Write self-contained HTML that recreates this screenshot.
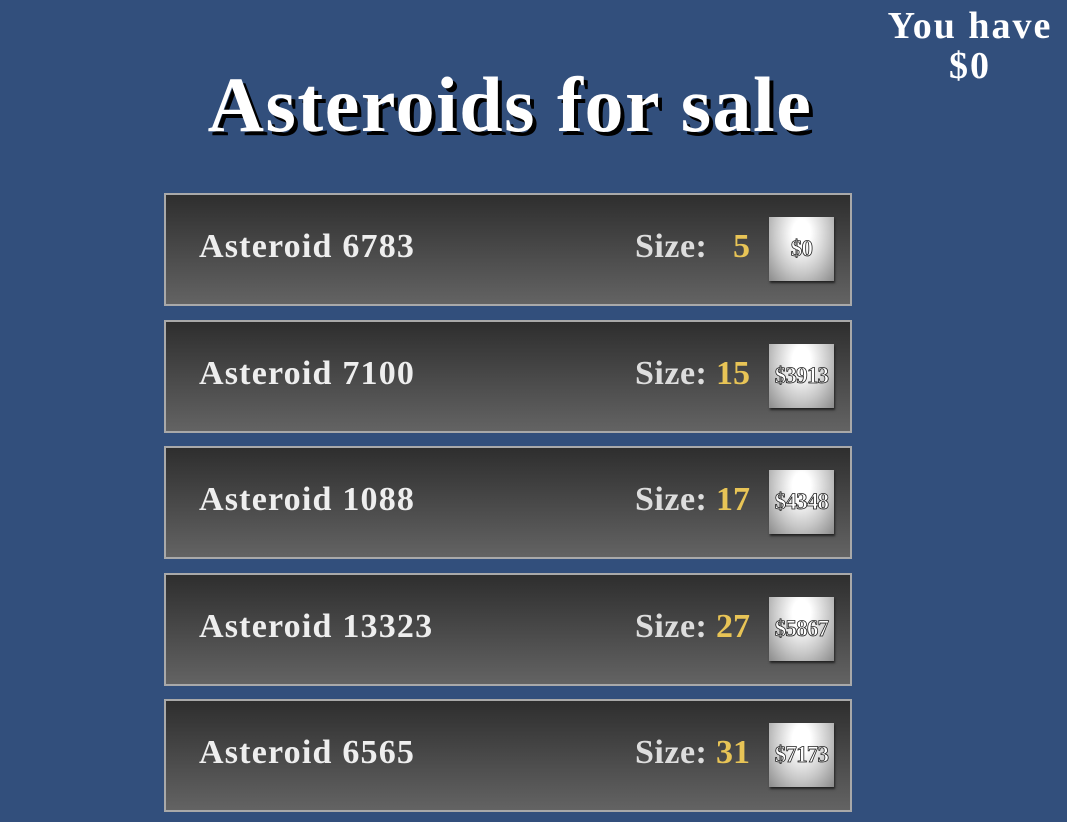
<!DOCTYPE html>
<html><head><style>
body{margin:0;width:1067px;height:822px;background:#324f7c;font-family:"Liberation Serif",serif;position:relative;overflow:hidden;color:#fff}
h1{position:absolute;left:0;width:1020px;text-align:center;top:60px;margin:0;font-size:78px;letter-spacing:1.5px;font-weight:bold;text-shadow:4px 4px 0 #000}
.have{position:absolute;left:870px;width:200px;text-align:center;top:6px;font-size:38px;letter-spacing:2px;font-weight:bold;line-height:40px}
.row{position:absolute;left:164px;width:688px;height:113px;border:2px solid #a9a9a9;background:linear-gradient(#2e2e2e,#636363);box-sizing:border-box}
.name{position:absolute;left:33px;top:33px;font-size:34px;letter-spacing:1.2px;font-weight:bold;color:#eee}
.size{position:absolute;left:469px;top:33px;font-size:34px;letter-spacing:0.5px;font-weight:bold;color:#ddd}
.num{position:absolute;right:100px;top:33px;font-size:34px;font-weight:bold;color:#e8c456}
.btn{position:absolute;left:603px;top:22px;width:65px;height:64px;background:radial-gradient(ellipse at 50% 25%,#fff 20%,#c8c8c8 60%,#8a8a8a);box-shadow:1px 2px 2px #222;display:flex;align-items:center;justify-content:center;font-size:23px;font-weight:bold;color:#fff;-webkit-text-stroke:0.8px #222;letter-spacing:-0.8px;white-space:nowrap}
</style></head><body>
<h1>Asteroids for sale</h1>
<div class="have">You have<br>$0</div>
<div class="row" style="top:193px"><span class="name">Asteroid 6783</span><span class="size">Size:</span><span class="num">5</span><div class="btn">$0</div></div>
<div class="row" style="top:320px"><span class="name">Asteroid 7100</span><span class="size">Size:</span><span class="num">15</span><div class="btn">$3913</div></div>
<div class="row" style="top:446px"><span class="name">Asteroid 1088</span><span class="size">Size:</span><span class="num">17</span><div class="btn">$4348</div></div>
<div class="row" style="top:573px"><span class="name">Asteroid 13323</span><span class="size">Size:</span><span class="num">27</span><div class="btn">$5867</div></div>
<div class="row" style="top:699px"><span class="name">Asteroid 6565</span><span class="size">Size:</span><span class="num">31</span><div class="btn">$7173</div></div>
</body></html>
